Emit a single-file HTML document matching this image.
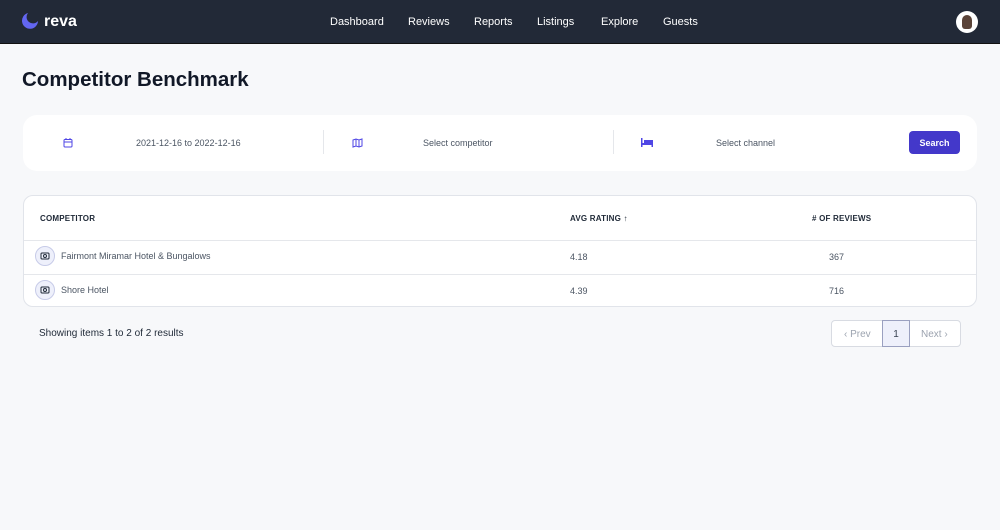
<!DOCTYPE html>
<html><head><style>
*{margin:0;padding:0;box-sizing:border-box}
body{width:1000px;height:530px;background:#f7f8fa;font-family:"Liberation Sans",sans-serif;position:relative;overflow:hidden;color:#1f2937}
.nav{position:absolute;left:0;top:0;width:1000px;height:44px;background:#222937;border-bottom:1px solid #111}
.nav a{position:absolute;top:16px;color:#fff;font-size:11px;text-decoration:none}
.abs{position:absolute}
h1{position:absolute;left:22px;top:68px;font-size:20.5px;font-weight:bold;color:#111827}
.card{position:absolute;background:#fff;border-radius:14px}
.t{position:absolute;font-size:9px;color:#4b5563}
.h{position:absolute;font-size:8px;font-weight:bold;color:#1f2937;letter-spacing:.2px}
.ic{position:absolute;width:20px;height:20px;border-radius:50%;background:#eef0fb;border:1px solid #c7cbe8}
</style></head><body>
<div class="nav">
 <svg class="abs" style="left:21px;top:12px" width="18" height="18" viewBox="0 0 18 18"><path d="M7 1 A8 8 0 1 0 17 9 A6 6 0 0 1 7 1Z" fill="#6366f1"/></svg>
 <div class="abs" style="left:44px;top:13px;color:#fff;font-weight:bold;font-size:16px">reva</div>
 <a style="left:330px">Dashboard</a><a style="left:408px">Reviews</a><a style="left:474px">Reports</a><a style="left:537px">Listings</a><a style="left:601px">Explore</a><a style="left:663px">Guests</a>
 <div class="abs" style="left:956px;top:11px;width:22px;height:22px;border-radius:50%;background:#fff"><div style="margin:4px 6px;width:10px;height:14px;border-radius:5px 5px 3px 3px;background:#5a4338"></div></div>
</div>
<h1>Competitor Benchmark</h1>
<div class="card" style="left:23px;top:115px;width:954px;height:56px">
 <svg class="abs" style="left:40px;top:23px" width="10" height="10" viewBox="0 0 10 10" fill="none" stroke="#4f46e5" stroke-width="1"><rect x="1" y="1.5" width="8" height="7.5" rx="1"/><path d="M1 4h8M3 0v2M7 0v2"/></svg>
 <div class="t" style="left:113px;top:23px">2021-12-16 to 2022-12-16</div>
 <div class="abs" style="left:300px;top:15px;width:1px;height:24px;background:#e5e7eb"></div>
 <svg class="abs" style="left:329px;top:23px" width="11" height="10" viewBox="0 0 11 10" fill="none" stroke="#4f46e5" stroke-width="1"><path d="M1 2l3-1 3 1 3-1v7l-3 1-3-1-3 1z M4 1v7M7 2v7"/></svg>
 <div class="t" style="left:400px;top:23px">Select competitor</div>
 <div class="abs" style="left:590px;top:15px;width:1px;height:24px;background:#e5e7eb"></div>
 <svg class="abs" style="left:618px;top:23px" width="12" height="9" viewBox="0 0 12 9" fill="#4f46e5"><rect x="0" y="0" width="1.5" height="9"/><rect x="0" y="5" width="12" height="2"/><rect x="3" y="2" width="9" height="3"/><rect x="10.5" y="5" width="1.5" height="4"/></svg>
 <div class="t" style="left:693px;top:23px">Select channel</div>
 <div class="abs" style="left:886px;top:16px;width:51px;height:23px;background:#4338ca;border-radius:4px;color:#fff;font-size:9px;font-weight:bold;text-align:center;line-height:25px">Search</div>
</div>
<div class="card" style="left:23px;top:195px;width:954px;height:112px;border:1px solid #e1e4ea;border-radius:10px">
 <div class="h" style="left:16px;top:18px">COMPETITOR</div>
 <div class="h" style="left:546px;top:18px">AVG RATING ↑</div>
 <div class="h" style="left:788px;top:18px"># OF REVIEWS</div>
 <div class="abs" style="left:0;top:44px;width:952px;height:1px;background:#e5e7eb"></div>
 <div class="abs" style="left:0;top:78px;width:952px;height:1px;background:#e5e7eb"></div>
 <div class="ic" style="left:11px;top:50px"></div><div class="ic" style="left:11px;top:84px"></div>
 <svg class="abs" style="left:16px;top:55px" width="10" height="9" viewBox="0 0 10 9" fill="none" stroke="#1f2937"><rect x="1" y="2" width="8" height="6" rx="1"/><circle cx="5" cy="5" r="1.5"/></svg>
 <svg class="abs" style="left:16px;top:89px" width="10" height="9" viewBox="0 0 10 9" fill="none" stroke="#1f2937"><rect x="1" y="2" width="8" height="6" rx="1"/><circle cx="5" cy="5" r="1.5"/></svg>
 <div class="t" style="left:37px;top:55px">Fairmont Miramar Hotel &amp; Bungalows</div>
 <div class="t" style="left:37px;top:89px">Shore Hotel</div>
 <div class="t" style="left:546px;top:56px">4.18</div><div class="t" style="left:546px;top:90px">4.39</div>
 <div class="t" style="left:805px;top:56px">367</div><div class="t" style="left:805px;top:90px">716</div>
</div>
<div class="abs" style="left:39px;top:328px;font-size:10px;color:#1f2937">Showing items 1 to 2 of 2 results</div>
<div class="abs" style="left:831px;top:320px;width:130px;height:27px;border:1px solid #d8dbe2;border-radius:4px;background:#fff;font-size:10px;color:#9ca3af">
 <span class="abs" style="left:12px;top:8px">‹ Prev</span>
 <div class="abs" style="left:50px;top:-1px;width:28px;height:27px;border:1px solid #9aa0c0;background:#eef0fb;color:#374151;text-align:center;line-height:27px">1</div>
 <span class="abs" style="left:89px;top:8px">Next ›</span>
</div>
</body></html>
